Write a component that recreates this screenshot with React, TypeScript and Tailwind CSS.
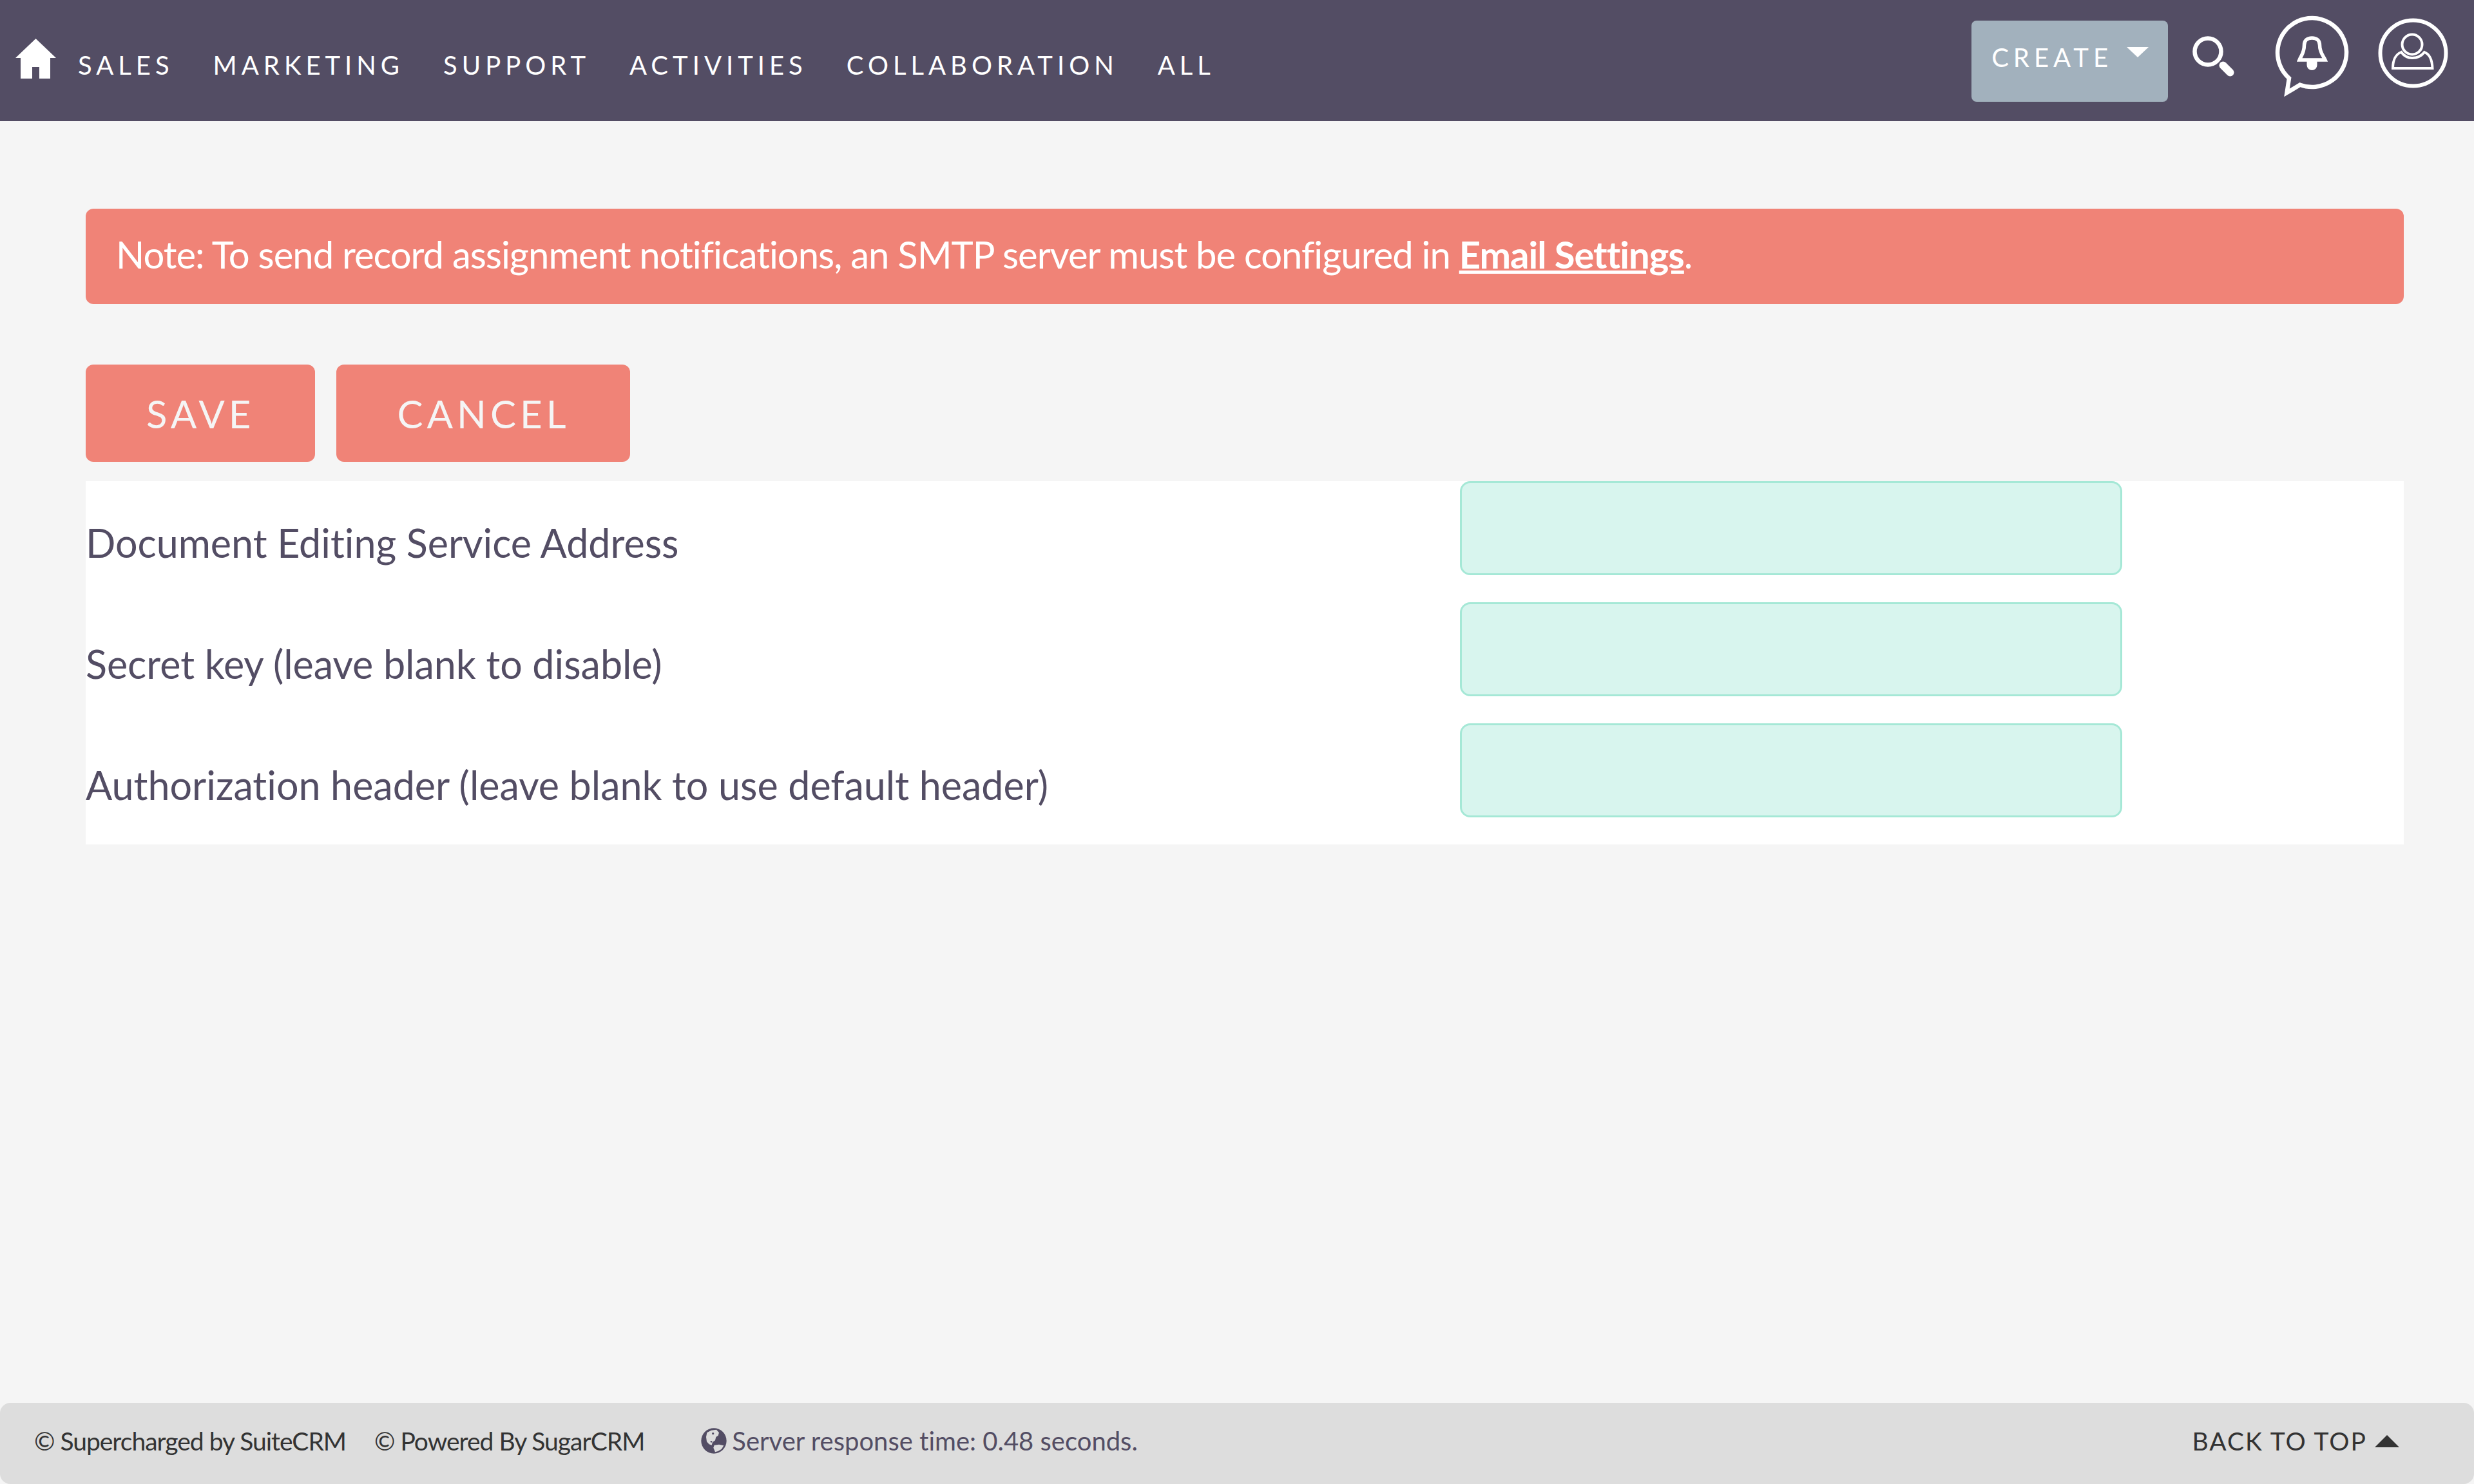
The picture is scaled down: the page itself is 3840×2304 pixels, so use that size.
import { useState } from 'react';

const NAV_ITEMS = ['Sales', 'Marketing', 'Support', 'Activities', 'Collaboration', 'All'];

const FIELDS = [
  { id: 'service-address', label: 'Document Editing Service Address' },
  { id: 'secret-key', label: 'Secret key (leave blank to disable)' },
  { id: 'auth-header', label: 'Authorization header (leave blank to use default header)' },
];

function HomeIcon() {
  return (
    <svg viewBox="0 0 63 62" className="h-[62px] w-[63px]" fill="currentColor" aria-hidden="true">
      <path d="M31.5 0 63 30h-9v32H37V44H26v18H8V30H0z" />
    </svg>
  );
}

function SearchIcon() {
  return (
    <svg viewBox="0 0 66 63" className="h-[63px] w-[66px]" fill="none" stroke="currentColor" aria-hidden="true">
      <circle cx="25" cy="24" r="20.5" strokeWidth="6.5" />
      <path d="M48.5 45.5 59.5 56.5" strokeWidth="12" strokeLinecap="round" />
    </svg>
  );
}

function NotificationIcon() {
  return (
    <svg viewBox="0 0 128 136" className="h-[136px] w-32" fill="none" stroke="currentColor" aria-hidden="true">
      <path d="M29 101.5A53.5 53.5 0 1 1 46 111.7L25.500 124Z" strokeWidth="6.5" />
      <path
        d="M45 73C48 66 52.5 62 52.5 50C52.5 43 57 39 64.5 39C72 39 76.5 43 76.5 50C76.5 62 82 66 85 73Z"
        strokeWidth="5.5"
      />
      <path d="M56.5 75h16v6a8 8 0 0 1-16 0z" fill="currentColor" stroke="none" />
    </svg>
  );
}

function UserIcon() {
  return (
    <svg viewBox="0 0 110 110" className="h-[110px] w-[110px]" fill="none" stroke="currentColor" aria-hidden="true">
      <circle cx="54.5" cy="54.5" r="51" strokeWidth="6" />
      <circle cx="53" cy="41" r="15.5" strokeWidth="4" />
      <path d="M23 78C23 65 28 56 36 53Q43 62 53 62Q65 62 72 53C80 56 84 65 84.5 78Z" strokeWidth="4" />
    </svg>
  );
}

function GlobeIcon() {
  return (
    <svg viewBox="0 0 120 120" className="h-10 w-10" aria-hidden="true">
      <circle cx="60" cy="60" r="59" fill="#534d64" />
      <path
        d="M28 22 48 11 72 8 84 22 80 36 70 42 66 58 54 66 50 80 38 76 27 64 24 42Z"
        fill="#dddddd"
      />
      <path d="M62 80 84 77 106 82 96 98 80 108 66 112 58 92Z" fill="#dddddd" />
      <circle cx="56" cy="26" r="5" fill="#534d64" />
      <circle cx="48" cy="64" r="4" fill="#534d64" />
    </svg>
  );
}

function Header() {
  return (
    <header className="flex h-[188px] items-start justify-between bg-[#534d64] pl-6 pr-[39px] text-[40px] leading-[48px] text-white">
      <nav className="flex items-start" aria-label="Main">
        <a href="#home" aria-label="Home" className="mr-[34px] mt-[60px]">
          <HomeIcon />
        </a>
        <ul className="mt-[77px] flex gap-[61px]">
          {NAV_ITEMS.map((item) => (
            <li key={item}>
              <a href={`#${item.toLowerCase()}`} className="uppercase tracking-[7px]">
                {item}
              </a>
            </li>
          ))}
        </ul>
      </nav>
      <div className="flex items-start">
        <button
          type="button"
          className="mr-[37px] mt-8 flex h-[126px] items-center gap-[22px] rounded-lg bg-[#a2b1bd] pb-3 pl-[31px] pr-[30px] tracking-[7px]"
        >
          CREATE
          <svg viewBox="0 0 34 16" className="-mt-4 h-4 w-[34px]" fill="currentColor" aria-hidden="true">
            <path d="M0 0h34L17 16z" />
          </svg>
        </button>
        <button type="button" aria-label="Search" className="mr-14 mt-14">
          <SearchIcon />
        </button>
        <button type="button" aria-label="Notifications" className="mr-[39px] mt-5">
          <NotificationIcon />
        </button>
        <button type="button" aria-label="User menu" className="mt-7">
          <UserIcon />
        </button>
      </div>
    </header>
  );
}

function SettingsForm() {
  const [values, setValues] = useState<Record<string, string>>({});
  return (
    <form className="mt-[94px]" onSubmit={(e) => e.preventDefault()}>
      <div className="flex gap-[33px] text-[60px] leading-[71px] tracking-[6px] text-[#f5f5f5]">
        <button type="submit" className="rounded-xl bg-[#f08377] px-[94px] pb-[39px] pt-[41px]">
          SAVE
        </button>
        <button
          type="reset"
          onClick={() => setValues({})}
          className="rounded-xl bg-[#f08377] px-[94px] pb-[39px] pt-[41px]"
        >
          CANCEL
        </button>
      </div>
      <div className="mt-[30px] bg-white">
        {FIELDS.map(({ id, label }) => (
          <div key={id} className="grid grid-cols-[83fr_40fr_17fr] pb-[42px]">
            <label
              htmlFor={id}
              className="mt-[60px] text-[61px] leading-[71px] text-[#534d64] [font-variant-ligatures:none]"
            >
              {label}
            </label>
            <input
              id={id}
              type="text"
              value={values[id] ?? ''}
              onChange={(e) => setValues({ ...values, [id]: e.target.value })}
              className="h-[146px] w-full rounded-2xl border-3 border-[#a5e8d6] bg-[#d8f5ee] px-8 text-[60px] text-[#534d64] outline-none"
            />
          </div>
        ))}
      </div>
    </form>
  );
}

function Footer() {
  return (
    <footer className="flex h-[126px] items-center rounded-2xl bg-[#dddddd] pb-2 pl-[53px] pr-[116px] text-[39px] leading-[48px] text-[#333333]">
      <a href="#suitecrm" className="mr-11 tracking-[-1px]">
        © Supercharged by SuiteCRM
      </a>
      <a href="#sugarcrm" className="mr-[88px] tracking-[-1px]">
        © Powered By SugarCRM
      </a>
      <p className="flex items-center gap-2 text-[40px] text-[#534d64] [font-variant-ligatures:none]">
        <GlobeIcon />
        Server response time: 0.48 seconds.
      </p>
      <a href="#top" className="ml-auto flex items-center gap-3 tracking-[2px]">
        BACK TO TOP
        <svg viewBox="0 0 38 19" className="h-[19px] w-[38px]" fill="currentColor" aria-hidden="true">
          <path d="M19 0 38 19H0z" />
        </svg>
      </a>
    </footer>
  );
}

export default function App() {
  return (
    <div id="top" className="flex min-h-screen flex-col bg-[#f5f5f5] font-['Lato',sans-serif]">
      <Header />
      <main className="flex-1 pl-[133px] pr-[109px] pt-[136px]">
        <p className="rounded-xl bg-[#f08377] px-[47px] pb-[42px] pt-[35px] text-[58px] leading-[71px] tracking-[-1px] text-white">
          Note: To send record assignment notifications, an SMTP server must be configured in{' '}
          <a href="#email-settings" className="font-bold underline">
            Email Settings
          </a>
          .
        </p>
        <SettingsForm />
      </main>
      <Footer />
    </div>
  );
}
